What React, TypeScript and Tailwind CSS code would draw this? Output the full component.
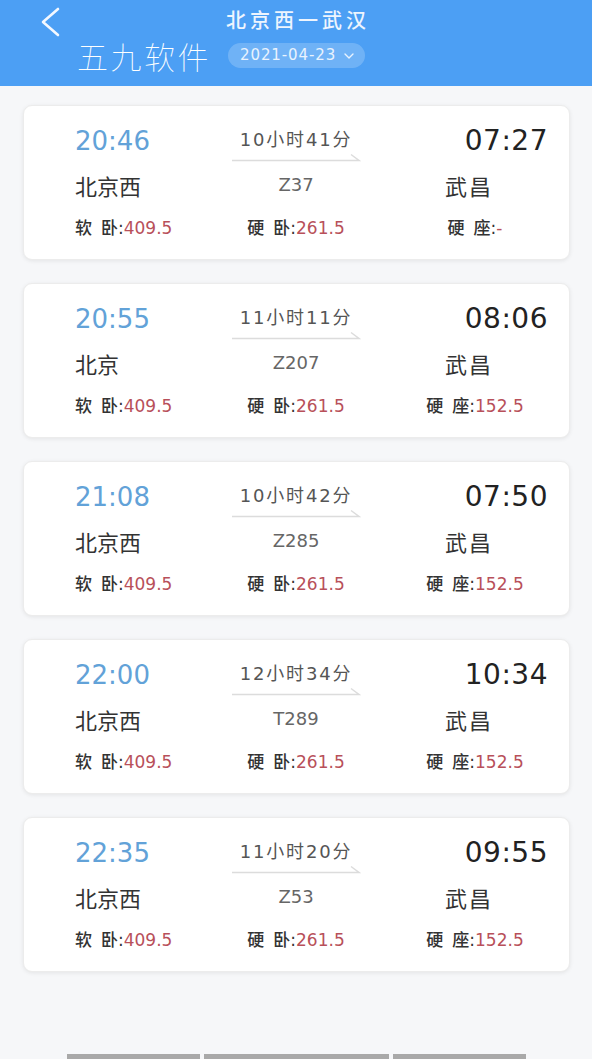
import { ChevronDown } from 'lucide-react';

const cjk = "font-['Noto_Sans_CJK_SC',sans-serif]";
const mixed = "font-['DejaVu_Sans','Noto_Sans_CJK_SC',sans-serif]";

interface Train {
  dep: string;
  arr: string;
  duration: string;
  from: string;
  to: string;
  code: string;
  soft: string;
  hard: string;
  seat: string;
}

const trains: Train[] = [
  { dep: '20:46', arr: '07:27', duration: '10小时41分', from: '北京西', to: '武昌', code: 'Z37', soft: '409.5', hard: '261.5', seat: '-' },
  { dep: '20:55', arr: '08:06', duration: '11小时11分', from: '北京', to: '武昌', code: 'Z207', soft: '409.5', hard: '261.5', seat: '152.5' },
  { dep: '21:08', arr: '07:50', duration: '10小时42分', from: '北京西', to: '武昌', code: 'Z285', soft: '409.5', hard: '261.5', seat: '152.5' },
  { dep: '22:00', arr: '10:34', duration: '12小时34分', from: '北京西', to: '武昌', code: 'T289', soft: '409.5', hard: '261.5', seat: '152.5' },
  { dep: '22:35', arr: '09:55', duration: '11小时20分', from: '北京西', to: '武昌', code: 'Z53', soft: '409.5', hard: '261.5', seat: '152.5' },
];

function Price({ label, value }: { label: string; value: string }) {
  return (
    <span className={`${mixed} text-[17px] leading-[24px] whitespace-nowrap`}>
      <span className="font-medium text-[#333]">{label[0]}</span>
      <span className="font-medium text-[#333] ml-[9px]">{label[1]}</span>
      <span className="text-[#333]">:</span>
      <span className="text-[#b8505a]">{value}</span>
    </span>
  );
}

function TrainCard({ t }: { t: Train }) {
  return (
    <div className="ml-[23px] mr-[22px] h-[155px] rounded-[9px] bg-white border border-[#ececec] shadow-[0_1px_4px_rgba(0,0,0,0.08)] pl-[51px] pr-[21px] pt-[17px]">
      <div className="flex items-start h-[36px]">
        <div className={`w-[150px] ${mixed} text-[26px] leading-[36px] text-[#62a2d8]`}>{t.dep}</div>
        <div className="w-[142px] flex flex-col items-center pt-[7px]">
          <span className={`${mixed} text-[18px] leading-[20px] tracking-[1.8px] text-[#555]`}>{t.duration}</span>
          <svg width="130" height="10" viewBox="0 0 130 10" className="mt-[3px]">
            <path d="M1 7.5 H128 L120 1.5" fill="none" stroke="#dcdcdc" strokeWidth="1.5" />
          </svg>
        </div>
        <div className={`ml-auto w-[146px] text-right ${mixed} text-[28px] leading-[36px] tracking-[0.5px] text-[#222]`}>{t.arr}</div>
      </div>
      <div className="flex items-center h-[36px] mt-[8px]">
        <div className={`w-[150px] ${cjk} text-[22px] leading-[36px] text-[#333]`}>{t.from}</div>
        <div className={`w-[142px] text-center ${mixed} text-[18px] leading-[36px] text-[#666]`}>{t.code}</div>
        <div className={`ml-auto w-[146px] text-center pr-[12px] ${cjk} text-[22px] leading-[36px] tracking-[2px] text-[#333]`}>{t.to}</div>
      </div>
      <div className="flex items-center h-[24px] mt-[13px]">
        <div className="w-[150px]">
          <Price label="软卧" value={t.soft} />
        </div>
        <div className="w-[142px] text-center">
          <Price label="硬卧" value={t.hard} />
        </div>
        <div className="ml-auto w-[146px] text-center">
          <Price label="硬座" value={t.seat} />
        </div>
      </div>
    </div>
  );
}

export default function App() {
  return (
    <div className="min-h-[1059px] w-[592px] bg-[#f6f7f9] overflow-hidden">
      <header className="h-[86px] bg-[#4c9ff4] flex flex-col">
        <div className="grid grid-cols-[1fr_auto_1fr] items-center h-[40px]">
          <div className="pl-[38px] pt-[2px]">
            <svg width="24" height="32" viewBox="0 0 24 32">
              <path d="M20 4 L5 17 L20 30" fill="none" stroke="#f3f8ff" strokeWidth="2.6" strokeLinecap="round" strokeLinejoin="round" />
            </svg>
          </div>
          <h1 className={`${cjk} font-medium text-[20px] leading-[24px] tracking-[4px] text-[#eef5fe] pl-[4px]`}>北京西一武汉</h1>
          <div />
        </div>
        <div className="flex items-center h-[31px]">
          <span className={`w-[151px] pl-[77px] box-content ${cjk} font-thin text-[31px] leading-[31px] tracking-[2.5px] text-white whitespace-nowrap`}>
            五九软件
          </span>
          <div className="flex items-center h-[25px] w-[137px] rounded-full bg-white/20 pl-[12px] gap-[5px]">
            <span className="font-['DejaVu_Sans',sans-serif] text-[15px] leading-[25px] tracking-[0.9px] text-[#e9f3fe]">2021-04-23</span>
            <ChevronDown className="w-[16px] h-[16px] text-[#e9f3fe]" strokeWidth={2} />
          </div>
        </div>
      </header>
      <main className="pt-[19px] flex flex-col gap-[23px]">
        {trains.map((t) => (
          <TrainCard key={t.code} t={t} />
        ))}
      </main>
      <div className="mt-[82px] flex justify-center gap-[4px]">
        <div className="w-[133px] h-[5px] bg-[#a9a9a9]" />
        <div className="w-[185px] h-[5px] bg-[#a9a9a9]" />
        <div className="w-[133px] h-[5px] bg-[#a9a9a9]" />
      </div>
    </div>
  );
}
